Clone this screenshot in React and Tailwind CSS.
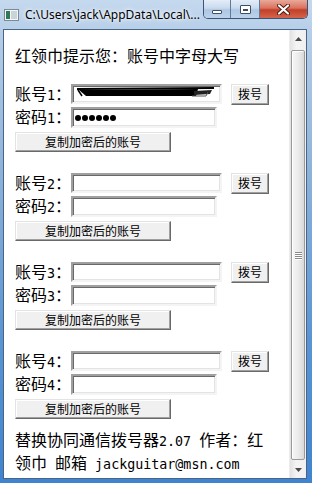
import React from 'react';

const cjk = 'font-["Noto_Sans_CJK_SC",sans-serif]';

// half-width latin run, 8px per char like the bitmap font
const M = ({ children }) => (
  <span className='font-["DejaVu_Sans_Mono",monospace] text-[13.33px]'>{children}</span>
);

const Edit = ({ className, children }) => (
  <div className={`shrink-0 bg-white border-2 border-t-[#a0a0a0] border-l-[#a0a0a0] border-b-[#f4f4f4] border-r-[#f4f4f4] shadow-[inset_1px_1px_0_#696969,inset_-1px_-1px_0_#e3e3e3] flex items-center relative overflow-hidden ${className}`}>
    {children}
  </div>
);

const Btn = ({ className, children }) => (
  <div className={`shrink-0 whitespace-nowrap bg-[#f0f0f0] border border-t-[#e3e3e3] border-l-[#e3e3e3] border-b-[#696969] border-r-[#696969] shadow-[inset_-1px_-1px_0_#a0a0a0,inset_1px_1px_0_#ffffff] flex items-center justify-center text-[12px] leading-none text-black ${className}`}>
    {children}
  </div>
);

const Label = ({ children }) => (
  <div className="w-[56px] shrink-0 whitespace-nowrap text-[16px] leading-[20px]">{children}</div>
);

const Scribble = () => (
  <svg width="150" height="16" viewBox="0 0 150 16" className="absolute left-[1px] top-[0px]">
    <path d="M3 3 L140 2" stroke="#000" strokeWidth="2" />
    <path d="M5 4 L124 3 L122 10 L12 10 Z" fill="#000" />
    <path d="M120 5 L138 4 L136 8 L120 9 Z" fill="#222" />
    <path d="M4 4 L8 10" stroke="#000" strokeWidth="1.5" />
    <path d="M118 10 L132 10 L134 6" stroke="#555" strokeWidth="1" fill="none" />
  </svg>
);

const Dots = () => (
  <div className="flex gap-[1px] ml-[2px]">
    {[0, 1, 2, 3, 4, 5].map((i) => (
      <div key={i} className="w-[6px] h-[6px] rounded-full bg-black"></div>
    ))}
  </div>
);

const Group = ({ n, first, className }) => (
  <div className={className}>
    <div className="flex items-center h-[20px]">
      <Label>账号<M>{n}</M>：</Label>
      <Edit className="w-[151px] h-[20px]">{first && <Scribble />}</Edit>
      <Btn className="ml-[9px] w-[38px] h-[21px]">拨号</Btn>
    </div>
    <div className="flex items-center h-[21px] mt-[3px]">
      <Label>密码<M>{n}</M>：</Label>
      <Edit className="w-[146px] h-[21px]">{first && <Dots />}</Edit>
    </div>
    <Btn className="mt-[4px] w-[156px] h-[20px]">复制加密后的账号</Btn>
  </div>
);

const TitleBar = () => (
  <div className="h-[29px] flex justify-between shrink-0">
    <div className="flex items-center gap-[6px] pl-[4px] pt-[1px]">
      <svg width="15" height="12" viewBox="0 0 15 12">
        <rect x="0.5" y="0.5" width="14" height="11" fill="#f4f4f4" stroke="#7c8a96" />
        <rect x="2" y="2" width="4" height="8" fill="#2f7a5a" />
        <rect x="7" y="2" width="6" height="8" fill="#c9d3da" />
      </svg>
      <span className='font-["Noto_Sans",sans-serif] text-[12px] text-black [text-shadow:0_0_6px_#fff,0_0_3px_#fff]'>
        C:\Users\jack\AppData\Local\...
      </span>
    </div>
    <div className="flex h-[19px] mr-[4px] border border-t-0 border-[#3a5577] rounded-b-[5px] overflow-hidden">
      <div className="w-[27px] bg-[linear-gradient(180deg,#e4edf7_0%,#c9daee_45%,#aec7e3_55%,#bcd3ea_100%)] border-r border-[#5f7a9c] flex items-end justify-center pb-[4px]">
        <div className="w-[10px] h-[4px] bg-white border border-[#3d4f66] rounded-[1px]"></div>
      </div>
      <div className="w-[29px] bg-[linear-gradient(180deg,#e4edf7_0%,#c9daee_45%,#aec7e3_55%,#bcd3ea_100%)] border-r border-[#5f7a9c] flex items-center justify-center">
        <div className="w-[11px] h-[9px] border border-[#3d4f66] bg-white p-[2px] pt-[3px] rounded-[1px]">
          <div className="w-full h-full border border-[#3d4f66] bg-[#cfdcea]"></div>
        </div>
      </div>
      <div className="w-[47px] bg-[linear-gradient(180deg,#e9a99a_0%,#d9725e_45%,#c2402a_55%,#d4654a_100%)] flex items-center justify-center">
        <svg width="13" height="11" viewBox="0 0 13 11">
          <path d="M2 1.5 L11 9.5 M11 1.5 L2 9.5" stroke="#4a1a12" strokeWidth="4" strokeLinecap="round" />
          <path d="M2 1.5 L11 9.5 M11 1.5 L2 9.5" stroke="#fff" strokeWidth="2.2" strokeLinecap="round" />
        </svg>
      </div>
    </div>
  </div>
);

const Arrow = ({ up }) => (
  <div className="h-[17px] flex items-center justify-center">
    <svg width="7" height="4" viewBox="0 0 7 4">
      <path d={up ? 'M0 4 L3.5 0 L7 4 Z' : 'M0 0 L3.5 4 L7 0 Z'} fill="#4a4a4a" />
    </svg>
  </div>
);

const ScrollBar = () => (
  <div className="w-[17px] h-full shrink-0 flex flex-col bg-[linear-gradient(90deg,#e2e2e2,#f4f4f4_40%,#f0f0f0)] border-l border-[#ececec]">
    <Arrow up />
    <div className="flex-1 mt-[3px] mb-[1px] mx-[1px] rounded-[2px] border border-[#9a9a9a] bg-[linear-gradient(90deg,#f6f6f6,#ececec_50%,#d9d9d9)] shadow-[inset_1px_1px_0_#fff] flex items-center justify-center">
      <div className="flex flex-col gap-[1px]">
        {[0, 1, 2, 3].map((i) => (
          <div key={i} className="w-[7px] h-[1px] bg-[#8a8a8a] shadow-[0_1px_0_#fff]"></div>
        ))}
      </div>
    </div>
    <Arrow />
  </div>
);

export default function App() {
  return (
    <div className="w-[312px] h-[483px] overflow-hidden flex flex-col bg-[linear-gradient(180deg,#c5d9ee_0%,#b3cce7_8%,#8eb3da_35%,#5a95d3_70%,#3f84d0_100%)]">
      <TitleBar />
      <div className="ml-[3px] mr-[5px] h-[450px] border border-[#4a6483] bg-white flex">
        <div className={`flex-1 min-w-0 pl-[11px] pt-[15px] text-black ${cjk}`}>
          <div className="text-[16px] leading-[20px] whitespace-nowrap">红领巾提示您：账号中字母大写</div>
          <Group n="1" first className="mt-[19px]" />
          <Group n="2" className="mt-[21px]" />
          <Group n="3" className="mt-[21px]" />
          <Group n="4" className="mt-[21px]" />
          <div className="mt-[10px] text-[16px] leading-[20px] whitespace-nowrap">
            <div>替换协同通信拨号器<M>2.07 </M>作者：红</div>
            <div>领巾<M> </M>邮箱<M> jackguitar@msn.com</M></div>
          </div>
        </div>
        <ScrollBar />
      </div>
    </div>
  );
}
